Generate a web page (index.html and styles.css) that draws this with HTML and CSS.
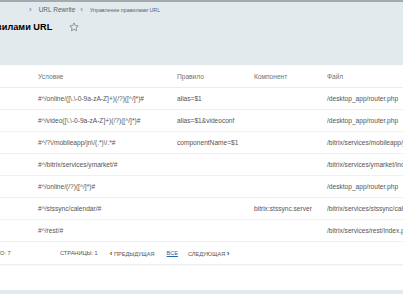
FILE: index.html
```
<!DOCTYPE html>
<html lang="ru">
<head>
    <meta charset="UTF-8">
    <meta name="viewport" content="width=device-width, initial-scale=1.0">
    <title>Управление правилами URL</title>
    <link rel="stylesheet" href="styles.css">
</head>
<body>

    <div class="top-line"></div>

    <div class="breadcrumbs">
        <span class="crumb-arrow">›</span>
        <a class="crumb" href="#">URL Rewrite</a>
        <span class="crumb-arrow">›</span>
        <a class="crumb crumb-last" href="#">Управление правилами URL</a>
    </div>

    <div class="title-row">
        <h1 class="page-title">Управление правилами URL</h1>
        <svg class="star" width="10" height="10" viewBox="0 0 20 20">
            <path d="M10 1.8l2.5 5.3 5.8.7-4.3 4 1.1 5.7L10 14.7l-5.1 2.8 1.1-5.7-4.3-4 5.8-.7z" fill="none" stroke="#7c8084" stroke-width="1.6" stroke-linejoin="round"/>
        </svg>
    </div>

    <div class="panel">
        <table class="grid">
            <thead>
                <tr>
                    <th class="col-first"></th>
                    <th class="col-cond">Условие</th>
                    <th class="col-rule">Правило</th>
                    <th class="col-comp">Компонент</th>
                    <th class="col-file">Файл</th>
                </tr>
            </thead>
            <tbody>
                <tr>
                    <td></td>
                    <td>#^/online/([\.\-0-9a-zA-Z]+)(/?)([^/]*)#</td>
                    <td>alias=$1</td>
                    <td></td>
                    <td>/desktop_app/router.php</td>
                </tr>
                <tr>
                    <td></td>
                    <td>#^/video([\.\-0-9a-zA-Z]+)(/?)([^/]*)#</td>
                    <td>alias=$1&amp;videoconf</td>
                    <td></td>
                    <td>/desktop_app/router.php</td>
                </tr>
                <tr>
                    <td></td>
                    <td>#^/?\/mobileapp/jn\/(.*)\/.*#</td>
                    <td>componentName=$1</td>
                    <td></td>
                    <td>/bitrix/services/mobileapp/jn.php</td>
                </tr>
                <tr>
                    <td></td>
                    <td>#^/bitrix/services/ymarket/#</td>
                    <td></td>
                    <td></td>
                    <td>/bitrix/services/ymarket/index.php</td>
                </tr>
                <tr>
                    <td></td>
                    <td>#^/online/(/?)([^/]*)#</td>
                    <td></td>
                    <td></td>
                    <td>/desktop_app/router.php</td>
                </tr>
                <tr>
                    <td></td>
                    <td>#^/stssync/calendar/#</td>
                    <td></td>
                    <td>bitrix:stssync.server</td>
                    <td>/bitrix/services/stssync/calendar/index.php</td>
                </tr>
                <tr>
                    <td></td>
                    <td>#^/rest/#</td>
                    <td></td>
                    <td></td>
                    <td>/bitrix/services/rest/index.php</td>
                </tr>
            </tbody>
        </table>

        <div class="pager">
            <span class="pager-total">ВСЕГО: 7</span>
            <span class="pager-pages">СТРАНИЦЫ: 1</span>
            <span class="pager-link"><b class="pager-arrow">‹</b> ПРЕДЫДУЩАЯ</span>
            <a class="pager-all" href="#">ВСЕ</a>
            <span class="pager-link">СЛЕДУЮЩАЯ <b class="pager-arrow">›</b></span>
        </div>
    </div>

    <div class="bottom-band"></div>

</body>
</html>
```
FILE: styles.css
```
/* Фон и шрифт админки */
body {
    margin: 0;
    padding: 0;
    background: #e3eaed;
    font-family: 'Liberation Sans', Arial, sans-serif;
    color: #555;
    overflow: hidden;
    width: 403px;
    height: 294px;
}

.top-line {
    height: 2px;
    background: #a4abaf;
}

.breadcrumbs {
    display: flex;
    align-items: center;
    gap: 5px;
    padding: 2px 0 0 29px;
    height: 11px;
    font-size: 6.5px;
    white-space: nowrap;
}

.crumb {
    color: #5a6266;
    text-decoration: none;
}

.crumb-last {
    font-size: 5.3px;
}

.crumb-arrow {
    color: #6a7175;
    font-size: 8px;
    margin-right: 2px;
}

.title-row {
    display: flex;
    align-items: center;
    height: 23px;
    white-space: nowrap;
}

.page-title {
    margin: 0 0 0 -77px;
    font-size: 9.2px;
    font-weight: bold;
    color: #000;
}

.star {
    margin-left: 17px;
}

/* Белая панель с таблицей */
.panel {
    margin-top: 27px;
    background: #fff;
    height: 225px;
}

.grid {
    border-collapse: collapse;
    width: 460px;
    font-size: 6.6px;
    white-space: nowrap;
}

.grid th {
    text-align: left;
    font-weight: normal;
    color: #6f7376;
    height: 22px;
    padding: 0;
    border-bottom: 1px solid #e9eced;
}

.grid td {
    height: 21px;
    padding: 0;
    color: #555;
    border-bottom: 1px solid #eef0f1;
}

.col-first { width: 38px; }
.col-cond { width: 139px; }
.col-rule { width: 77px; }
.col-comp { width: 73px; }

.pager {
    display: flex;
    align-items: center;
    height: 22px;
    font-size: 5.6px;
    color: #555;
    white-space: nowrap;
    border-bottom: 1px solid #eef0f1;
    box-shadow: 0 1px 1px rgba(0, 0, 0, 0.03);
}

.pager-total {
    margin-left: -14px;
    width: 74px;
}

.pager-pages {
    margin-right: 12px;
}

.pager-arrow {
    font-size: 8px;
    color: #444;
}

.pager-all {
    color: #2067b0;
    margin: 0 10px 0 12px;
}

.bottom-band {
    height: 4px;
}
```
